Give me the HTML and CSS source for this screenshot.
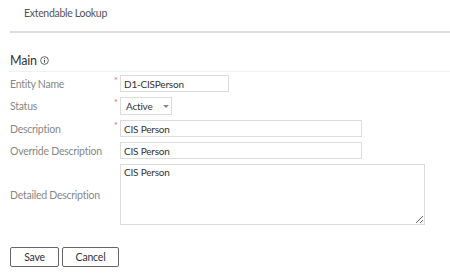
FILE: index.html
```html
<!DOCTYPE html>
<html lang="en">
<head>
    <meta charset="UTF-8">
    <title>Extendable Lookup</title>
    <link rel="stylesheet" href="styles.css">
</head>
<body>
    <div class="page-title">Extendable Lookup</div>

    <div class="section">
        <div class="section-head">
            <span>Main</span>
            <svg class="info" width="9" height="9" viewBox="0 0 10 10">
                <circle cx="5" cy="5" r="4.3" fill="none" stroke="#444" stroke-width="0.9"/>
                <line x1="5" y1="4.2" x2="5" y2="7.6" stroke="#444" stroke-width="1"/>
                <circle cx="5" cy="2.8" r="0.6" fill="#444"/>
            </svg>
        </div>

        <div class="form">
            <label class="label">Entity Name</label>
            <span class="req">*</span>
            <div class="field"><input class="input w-short" type="text" value="D1-CISPerson"></div>

            <label class="label">Status</label>
            <span class="req">*</span>
            <div class="field">
                <div class="select">Active <span class="caret"></span></div>
            </div>

            <label class="label">Description</label>
            <span class="req">*</span>
            <div class="field"><input class="input w-long" type="text" value="CIS Person"></div>

            <label class="label">Override Description</label>
            <span></span>
            <div class="field"><input class="input w-long" type="text" value="CIS Person"></div>

            <label class="label">Detailed Description</label>
            <span></span>
            <div class="field"><textarea class="textarea">CIS Person</textarea></div>
        </div>

        <div class="actions">
            <button class="btn save">Save</button>
            <button class="btn cancel">Cancel</button>
        </div>
    </div>
</body>
</html>
```

FILE: styles.css
```css
* { margin: 0; padding: 0; box-sizing: border-box; }
body {
    font-family: Lato, "Noto Sans", sans-serif;
    background: #fff;
    color: #333;
    width: 450px;
    overflow: hidden;
}
.page-title {
    margin-left: 10px;
    padding: 7px 0 0 14px;
    height: 33px;
    font-size: 10.5px;
    letter-spacing: -0.3px;
    color: #555;
    border-bottom: 2px solid #ddd;
}
.section { padding-top: 20px; }
.section-head {
    margin-left: 8px;
    padding: 0 0 3px 2px;
    font-size: 12.5px;
    letter-spacing: -0.2px;
    color: #333;
    border-bottom: 1px solid #f0f0f0;
    display: flex;
    align-items: center;
    gap: 3px;
}
.info { margin-top: -1px; }
.form {
    display: grid;
    grid-template-columns: 106px 4px auto;
    row-gap: 5px;
    align-items: center;
    padding: 3px 0 0 10px;
}
.label {
    font-size: 10.5px;
    letter-spacing: -0.25px;
    color: #888;
}
.req {
    align-self: start;
    color: #d0734f;
    font-size: 9px;
    line-height: 9px;
    margin-top: 1px;
    margin-left: -2px;
}
.field { display: flex; }
.input {
    height: 17px;
    border: 1px solid #dcdcdc;
    font-family: inherit;
    font-size: 10px;
    letter-spacing: -0.2px;
    color: #333;
    padding: 0 3px;
    outline: none;
}
.w-short { width: 109px; }
.w-long { width: 242px; }
.select {
    height: 18px;
    width: 52px;
    border: 1px solid #dcdcdc;
    font-size: 10px;
    letter-spacing: -0.2px;
    color: #333;
    padding: 0 0 0 5px;
    display: flex;
    align-items: center;
    gap: 10px;
}
.caret {
    width: 0; height: 0;
    border-left: 3px solid transparent;
    border-right: 3px solid transparent;
    border-top: 3px solid #888;
}
.textarea {
    width: 305px;
    height: 61px;
    border: 1px solid #dcdcdc;
    font-family: inherit;
    font-size: 10px;
    letter-spacing: -0.2px;
    color: #333;
    padding: 0 3px;
    line-height: 14px;
    resize: both;
    outline: none;
}
.actions {
    display: flex;
    gap: 3px;
    padding: 22px 0 0 10px;
}
.btn {
    height: 20px;
    border: 1px solid #666;
    border-radius: 2px;
    background: #fff;
    font-family: inherit;
    font-size: 10.5px;
    letter-spacing: -0.2px;
    color: #333;
}
.save { width: 49px; }
.cancel { width: 57px; }
```
